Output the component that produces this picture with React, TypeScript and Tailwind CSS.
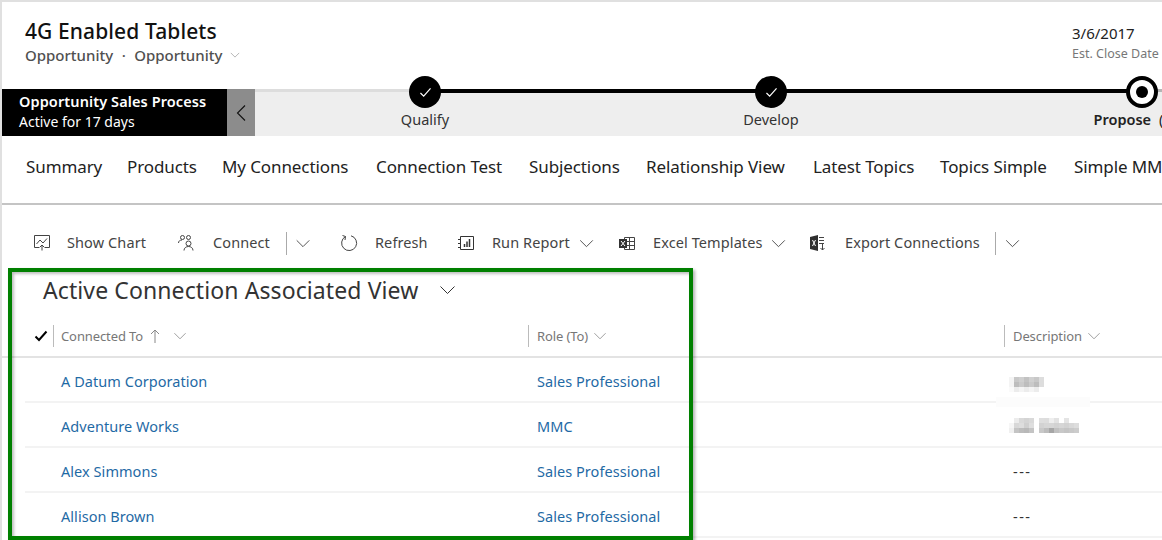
const FONT = "font-['Noto_Sans','Open_Sans',sans-serif]";

const TABS = [
  { label: 'Summary', w: 'w-[101px]' },
  { label: 'Products', w: 'w-[95px]' },
  { label: 'My Connections', w: 'w-[154px]' },
  { label: 'Connection Test', w: 'w-[153px]' },
  { label: 'Subjections', w: 'w-[117px]' },
  { label: 'Relationship View', w: 'w-[167px]' },
  { label: 'Latest Topics', w: 'w-[127px]' },
  { label: 'Topics Simple', w: 'w-[134px]' },
  { label: 'Simple MMC', w: 'w-[110px]' },
];

const ROWS = [
  { name: 'A Datum Corporation', role: 'Sales Professional', desc: 'a' },
  { name: 'Adventure Works', role: 'MMC', desc: 'b' },
  { name: 'Alex Simmons', role: 'Sales Professional', desc: '---' },
  { name: 'Allison Brown', role: 'Sales Professional', desc: '---' },
];

function Chevron({ className }: { className?: string }) {
  return (
    <svg viewBox="0 0 16 10" fill="none" stroke="currentColor" strokeWidth="1" className={className}>
      <path d="M1 1.500 8 8.500 15 1.500" />
    </svg>
  );
}

function Check({ className, weight = 1.3 }: { className?: string; weight?: number }) {
  return (
    <svg viewBox="0 0 14 12" fill="none" stroke="currentColor" strokeWidth={weight} className={className}>
      <path d="M1.500 6.500 5 10 12.500 1.500" />
    </svg>
  );
}

function ChartIcon() {
  return (
    <svg viewBox="0 0 18 16" fill="none" stroke="#444" strokeWidth="1" className="h-4 w-[18px]">
      <path d="M1.500 0.500h15v12h-5M6.500 12.500h-5v-12" />
      <path d="M3.500 9 7 5l3 3 4-4.500" />
      <path d="M9 15.500V10M7 12l2-2 2 2" />
    </svg>
  );
}

function ConnectIcon() {
  return (
    <svg viewBox="0 0 16 16" fill="none" stroke="#444" strokeWidth="1" className="h-4 w-4">
      <circle cx="4.500" cy="2.500" r="2" />
      <circle cx="10.500" cy="2.500" r="2" />
      <circle cx="10.500" cy="8.500" r="2.500" />
      <path d="M0.500 8c0-2 1.500-3 3.500-3M6 15.500c0-2.500 2-4 4.500-4s4.500 1.500 4.500 4" />
    </svg>
  );
}

function RefreshIcon() {
  return (
    <svg viewBox="0 0 18 18" fill="none" stroke="#444" strokeWidth="1" className="h-[18px] w-[18px]">
      <path d="M5.500 2.500A7.500 7.500 0 1 0 11 1.800" />
      <path d="M2.500 1.500 5.500 2.500 5 6" />
    </svg>
  );
}

function ReportIcon() {
  return (
    <svg viewBox="0 0 16 16" fill="none" stroke="#333" strokeWidth="1" className="h-4 w-4">
      <path d="M2.500 1.500h13v13h-13z" />
      <path d="M0 4.500h3M0 8.500h3M0 12.500h3" />
      <path d="M6.500 12V9M9 12V6.500M11.500 12V4" strokeWidth="1.500" />
    </svg>
  );
}

function ExcelTemplateIcon() {
  return (
    <svg viewBox="0 0 16 15" className="h-[15px] w-4">
      <path d="M5.500 1.500h10v12h-10zM5.500 5.500h10M5.500 9.500h10M10.500 1.500v12" fill="none" stroke="#444" />
      <rect x="0" y="3" width="8" height="9" fill="#333" />
      <path d="M2 5l4 5M6 5l-4 5" stroke="#fff" strokeWidth="1" />
    </svg>
  );
}

function ExportIcon() {
  return (
    <svg viewBox="0 0 16 16" className="h-4 w-4">
      <path d="M0 2 8 0v16L0 14z" fill="#2f2f2f" />
      <path d="M2.500 5l3 6M5.500 5l-3 6" stroke="#fff" strokeWidth="1" />
      <path d="M9 2.500h5M9 5.500h5M9 8.500h5M12.500 9v6M10.500 13l2 2 2-2" stroke="#444" fill="none" />
    </svg>
  );
}

// Obscured description cells in the screenshot are coarse 5px mosaics.
function Mosaic({ cells, className }: { cells: [number, number, string][]; className?: string }) {
  return (
    <svg viewBox="0 0 75 15" className={className}>
      {cells.map(([x, y, fill]) => (
        <rect key={`${x}-${y}`} x={x * 5} y={y * 5} width="5" height="5" fill={fill} />
      ))}
    </svg>
  );
}

const MOSAIC_A: [number, number, string][] = [
  [0, 0, '#f4f4f4'], [1, 0, '#c8c8c8'], [2, 0, '#cfcfcf'], [3, 0, '#c2c2c2'], [4, 0, '#d0d0d0'], [5, 0, '#c8c8c8'], [6, 0, '#dddddd'],
  [0, 1, '#f4f4f4'], [1, 1, '#bdbdbd'], [2, 1, '#cacaca'], [3, 1, '#bdbdbd'], [4, 1, '#cacaca'], [5, 1, '#bdbdbd'], [6, 1, '#dddddd'],
  [0, 2, '#fafafa'], [1, 2, '#ececec'], [2, 2, '#f4f4f4'], [3, 2, '#ececec'], [4, 2, '#f4f4f4'], [5, 2, '#ececec'],
];

const MOSAIC_B: [number, number, string][] = [
  [1, 0, '#ececec'], [2, 0, '#d9d9d9'], [3, 0, '#d4d4d4'], [4, 0, '#d9d9d9'], [6, 0, '#dedede'], [7, 0, '#dddddd'], [8, 0, '#eeeeee'], [9, 0, '#e2e2e2'], [11, 0, '#e4e4e4'],
  [0, 1, '#f6f6f6'], [1, 1, '#d8d8d8'], [2, 1, '#dddddd'], [3, 1, '#cfcfcf'], [4, 1, '#dedede'], [6, 1, '#d2d2d2'], [7, 1, '#d6d6d6'], [8, 1, '#d6d6d6'], [9, 1, '#d2d2d2'], [10, 1, '#d6d6d6'], [11, 1, '#d2d2d2'], [12, 1, '#d8d8d8'], [13, 1, '#dddddd'],
  [0, 2, '#f0f0f0'], [1, 2, '#c4c4c4'], [2, 2, '#bcbcbc'], [3, 2, '#b8b8b8'], [4, 2, '#c4c4c4'], [6, 2, '#c8c8c8'], [7, 2, '#bdbdbd'], [8, 2, '#a6a6a6'], [9, 2, '#c0c0c0'], [10, 2, '#c8c8c8'], [11, 2, '#c4c4c4'], [12, 2, '#c8c8c8'], [13, 2, '#cccccc'],
];

function Stage({ label, state, w }: { label: string; state: 'done' | 'active'; w: string }) {
  return (
    <div className={`flex shrink-0 flex-col items-center ${w}`}>
      {state === 'done' ? (
        <div className="relative z-10 -mt-[13px] flex h-[32px] w-[32px] items-center justify-center rounded-full bg-black">
          <Check className="h-[11px] w-[13px] text-white" />
        </div>
      ) : (
        <div className="relative z-10 -mt-[13px] flex h-[32px] w-[32px] items-center justify-center rounded-full border-[4px] border-black bg-white">
          <div className="h-[12px] w-[12px] rounded-full bg-black" />
        </div>
      )}
      <div className={`whitespace-nowrap text-[14.500px] leading-[22px] ${state === 'active' ? 'font-semibold text-[#222]' : 'text-[#333]'}`}>
        {label}
        {state === 'active' && (
          <>
            <span className="ml-[8px] font-normal">(</span>
            <span className="inline-block w-[27px]" />
          </>
        )}
      </div>
    </div>
  );
}

function CommandSep() {
  return <div className="h-[23px] w-px bg-[#aaa]" />;
}

export default function App() {
  return (
    <div className={`relative h-[540px] w-[1162px] overflow-hidden border-l-2 border-t-[2px] border-[#e0e0e0] bg-white ${FONT}`}>
      {/* Record header */}
      <div className="flex h-[87px] items-start justify-between pl-[23px] pr-[3px]">
        <div className="pt-[15px]">
          <div className="text-[21px] font-medium leading-[28px] tracking-[0.1px] text-[#111]">4G Enabled Tablets</div>
          <div className="flex items-center text-[15px] font-medium leading-[20px] text-[#505050]">
            <span>Opportunity</span>
            <span className="mx-[8.500px]">·</span>
            <span>Opportunity</span>
            <Chevron className="ml-[8px] h-[6px] w-[10px] text-[#888]" />
          </div>
        </div>
        <div className="w-[87px] shrink-0 pt-[21px]">
          <div className="text-[15px] leading-[20px] text-[#222]">3/6/2017</div>
          <div className="mt-[1px] whitespace-nowrap text-[12.500px] leading-[20px] text-[#777]">Est. Close Date</div>
        </div>
      </div>

      {/* Business process bar */}
      <div className="flex h-[47px]">
        <div className="flex w-[225px] shrink-0 flex-col justify-center bg-black pb-[2px] pl-[17px] text-white">
          <div className="text-[14.500px] font-semibold leading-[21px] tracking-[0.1px]">Opportunity Sales Process</div>
          <div className="text-[14px] leading-[20px]">Active for 17 days</div>
        </div>
        <div className="flex w-[28px] shrink-0 items-center justify-center bg-[#8c8c8c] text-[#111]">
          <svg viewBox="0 0 10 16" fill="none" stroke="currentColor" strokeWidth="1.100" className="h-[16px] w-[10px]">
            <path d="M9 0.500 1.500 8 9 15.500" />
          </svg>
        </div>
        <div className="relative flex min-w-0 flex-1 bg-[#eeeeee]">
          <div className="absolute left-0 top-0 h-[3px] w-[170px] bg-[#dddddd]" />
          <div className="absolute left-[170px] top-0 h-[4px] w-[717px] bg-black" />
          <div className="absolute left-[887px] right-0 top-0 h-[3px] bg-[#b4b4b4]" />
          <Stage label="Qualify" state="done" w="w-[340px]" />
          <Stage label="Develop" state="done" w="w-[352px]" />
          <Stage label="Propose" state="active" w="w-[390px]" />
        </div>
      </div>

      {/* Tabs */}
      <div className="flex h-[67px] items-center overflow-hidden whitespace-nowrap pb-[5px] pl-[24px] text-[17px] tracking-[-0.1px] text-[#222]">
        {TABS.map((t) => (
          <div key={t.label} className={`shrink-0 ${t.w}`}>
            {t.label}
          </div>
        ))}
      </div>
      <div className="h-[2px] bg-[#c4c4c4]" />

      {/* Command bar */}
      <div className="flex h-[64px] items-center whitespace-nowrap pl-[31px] pt-[12px] text-[14.500px] tracking-[0.1px] text-[#444]">
        <ChartIcon />
        <span className="ml-[16px] w-[80px]">Show Chart</span>
        <div className="ml-[31px]"><ConnectIcon /></div>
        <span className="ml-[19px] w-[57px]">Connect</span>
        <div className="ml-[16px]"><CommandSep /></div>
        <Chevron className="ml-[8px] h-[9px] w-[16px] text-[#444]" />
        <div className="ml-[29px]"><RefreshIcon /></div>
        <span className="ml-[17px] w-[51px]">Refresh</span>
        <div className="ml-[32px]"><ReportIcon /></div>
        <span className="ml-[18px] w-[77px]">Run Report</span>
        <Chevron className="ml-[10px] h-[9px] w-[15px] text-[#444]" />
        <div className="ml-[25px]"><ExcelTemplateIcon /></div>
        <span className="ml-[18px] w-[108px]">Excel Templates</span>
        <Chevron className="ml-[10px] h-[9px] w-[15px] text-[#444]" />
        <div className="ml-[24px]"><ExportIcon /></div>
        <span className="ml-[19px] w-[135px]">Export Connections</span>
        <div className="ml-[15px]"><CommandSep /></div>
        <Chevron className="ml-[9px] h-[9px] w-[15px] text-[#444]" />
      </div>

      {/* View title */}
      <div className="flex h-[42px] items-center pl-[41px] text-[#333]">
        <span className="whitespace-nowrap text-[23px] tracking-[0.1px]">Active Connection Associated View</span>
        <Chevron className="ml-[21px] h-[10px] w-[17px] text-[#333]" />
      </div>

      {/* Grid */}
      <div className="flex h-[47px] items-center border-b-2 border-[#e3e3e3] pt-[4px] text-[13px] tracking-[-0.1px] text-[#777]">
        <div className="flex w-[51px] shrink-0 justify-end pr-[5px]">
          <Check weight={2} className="h-[12px] w-[14px] text-black" />
        </div>
        <div className="flex w-[475px] shrink-0 items-center border-l border-[#bbb] pl-[7px] leading-[22px]">
          <span>Connected To</span>
          <svg viewBox="0 0 10 14" fill="none" stroke="#888" strokeWidth="1" className="ml-[7px] h-[14px] w-[10px]">
            <path d="M5 14V1M1 5l4-4 4 4" />
          </svg>
          <Chevron className="ml-[13px] h-[8px] w-[14px] text-[#888]" />
        </div>
        <div className="flex w-[476px] shrink-0 items-center border-l border-[#bbb] pl-[8px] leading-[22px]">
          <span>Role (To)</span>
          <Chevron className="ml-[5px] h-[8px] w-[14px] text-[#888]" />
        </div>
        <div className="flex items-center border-l border-[#bbb] pl-[8px] leading-[22px]">
          <span>Description</span>
          <Chevron className="ml-[5px] h-[8px] w-[14px] text-[#888]" />
        </div>
      </div>
      {ROWS.map((r) => (
        <div key={r.name} className="ml-[23px] flex h-[45px] items-center border-b-2 border-[#f3f3f3] pt-[4px] text-[14.500px] tracking-[0.05px]">
          <div className="w-[476px] shrink-0 whitespace-nowrap pl-[36px] text-[#1f6aa5]">{r.name}</div>
          <div className="w-[476px] shrink-0 whitespace-nowrap pl-[36px] text-[#1f6aa5]">{r.role}</div>
          <div className="w-[140px] shrink-0 pl-[32px] text-[#333]">
            {r.desc === 'a' && <Mosaic cells={MOSAIC_A} className="mt-[5px] h-[15px] w-[75px]" />}
            {r.desc === 'b' && <Mosaic cells={MOSAIC_B} className="-mt-[3px] h-[15px] w-[75px]" />}
            {r.desc === '---' && <span className="pl-[4px] tracking-[1.500px]">---</span>}
          </div>
        </div>
      ))}

      {/* Annotation rectangle drawn over the screenshot */}
      <div className="absolute left-[6px] top-[266px] h-[272px] w-[685px] border-[4px] border-[#008000] shadow-[2px_2px_3px_rgba(0,0,0,0.3),inset_2px_2px_3px_rgba(0,0,0,0.25)]" />
      <div className="absolute left-[994px] top-[395px] h-[10px] w-[94px] bg-[#fcfcfc]" />
    </div>
  );
}
